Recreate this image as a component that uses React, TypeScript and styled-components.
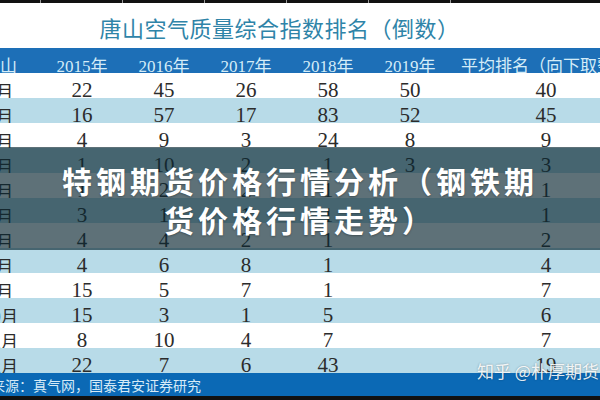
import React from "react";
import styled, {createGlobalStyle} from "styled-components";

const GlobalStyle = createGlobalStyle`
  html, body {
    margin: 0;
    padding: 0;
    background: #ffffff;
  }
`;

const columns = '82px 82px 82px 82px 82px 82px 190px';

const rows: string[][] = [
   ['1月', '22', '45', '26', '58', '50', '40'],
   ['2月', '16', '57', '17', '83', '52', '45'],
   ['3月', '4', '9', '3', '24', '8', '9'],
   ['4月', '1', '10', '2', '1', '3', '3'],
   ['5月', '1', '2', '2', '1', '', '1'],
   ['6月', '3', '1', '1', '1', '', '1'],
   ['7月', '4', '4', '2', '1', '', '2'],
   ['8月', '4', '6', '8', '1', '', '4'],
   ['9月', '15', '5', '7', '1', '', '7'],
   ['10月', '15', '3', '1', '5', '', '6'],
   ['11月', '8', '10', '4', '7', '', '7'],
   ['12月', '22', '7', '6', '43', '', '19'],
];

const headers = ['唐山', '2015年', '2016年', '2017年', '2018年', '2019年', '平均排名（向下取整）'];

export default function App() {
   return (
      <Page>
         <GlobalStyle/>
         <Sheet>
            <TopStrip>
               {headers.map((h) => <TopTick key={h}/>)}
            </TopStrip>
            <TitleRow>唐山空气质量综合指数排名（倒数）</TitleRow>
            <HeaderRow>
               {headers.map((h) => <HeaderCell key={h}>{h}</HeaderCell>)}
            </HeaderRow>
            {rows.map((row, i) => (
               <DataRow key={row[0]} striped={i % 2 === 1}>
                  {row.map((v, j) => (
                     <DataCell key={j} month={j === 0}>{v}</DataCell>
                  ))}
               </DataRow>
            ))}
            <Footer>来源：真气网，国泰君安证券研究</Footer>
            <BottomStrip/>
         </Sheet>
         <Overlay>
            <OverlayTitle>
               <span>特钢期货价格行情分析（钢铁期</span>
               <span>货价格行情走势）</span>
            </OverlayTitle>
         </Overlay>
         <Watermark>知乎 @朴厚期货</Watermark>
      </Page>
   );
}

const Page = styled.div`
  position: relative;
  width: 600px;
  height: 400px;
  overflow: hidden;
  background: #ffffff;
`
const Sheet = styled.div`
  display: flex;
  flex-direction: column;
  margin-left: -41px;
  width: 682px;
`
const TopStrip = styled.div`
  display: grid;
  grid-template-columns: ${columns};
  height: 3px;
  background: #111111;
`
const TopTick = styled.div`
  border-right: 1px solid #9a9a9a;
`
const TitleRow = styled.div`
  height: 45px;
  padding-left: 41px;
  width: 600px;
  display: flex;
  align-items: center;
  justify-content: center;
  padding-top: 2px;
  box-sizing: border-box;
  font-family: "Noto Sans CJK SC", sans-serif;
  font-size: 22px;
  color: #2f84a8;
  letter-spacing: 0.5px;
`
const HeaderRow = styled.div`
  display: grid;
  grid-template-columns: ${columns};
  height: 25px;
  background: #1d6fb7;
`
const HeaderCell = styled.div`
  display: flex;
  align-items: center;
  justify-content: center;
  padding-top: 4px;
  box-sizing: border-box;
  white-space: nowrap;
  font-family: "Liberation Serif", "Noto Sans CJK SC", serif;
  font-size: 17px;
  color: #d4ecf8;
`
const DataRow = styled.div<{striped: boolean}>`
  display: grid;
  grid-template-columns: ${columns};
  height: 25px;
  background: ${(p) => (p.striped ? '#b8dbe8' : '#ffffff')};
`
const DataCell = styled.div<{month: boolean}>`
  display: flex;
  align-items: center;
  justify-content: center;
  padding-top: 5px;
  box-sizing: border-box;
  white-space: nowrap;
  font-family: ${(p) => (p.month ? '"Noto Sans CJK SC", sans-serif' : '"Liberation Serif", serif')};
  font-size: ${(p) => (p.month ? '17px' : '21px')};
  color: #2b2b2b;
`
const Footer = styled.div`
  height: 23px;
  display: flex;
  align-items: center;
  padding-left: 32px;
  font-family: "Noto Sans CJK SC", sans-serif;
  font-size: 14px;
  color: #d6ebf7;
  background: #0b69b5;
`
const BottomStrip = styled.div`
  height: 4px;
  background: #111111;
`
const Overlay = styled.div`
  position: absolute;
  left: 0;
  right: 0;
  top: 147px;
  height: 103px;
  display: flex;
  align-items: center;
  justify-content: center;
  background: rgba(10, 40, 50, 0.66);
`
const OverlayTitle = styled.div`
  display: flex;
  flex-direction: column;
  align-items: center;
  padding-top: 3px;
  font-family: "Noto Sans CJK SC", sans-serif;
  font-weight: 700;
  font-size: 30px;
  line-height: 39px;
  letter-spacing: 4px;
  color: #ffffff;
  text-shadow: 0 1px 2px rgba(0, 0, 0, 0.3);
`
const Watermark = styled.div`
  position: absolute;
  left: 477px;
  top: 358px;
  white-space: nowrap;
  font-family: "Noto Sans CJK SC", sans-serif;
  font-size: 17px;
  color: rgba(255, 255, 255, 0.9);
  text-shadow: 0 0 2px rgba(0, 0, 0, 0.35);
`
